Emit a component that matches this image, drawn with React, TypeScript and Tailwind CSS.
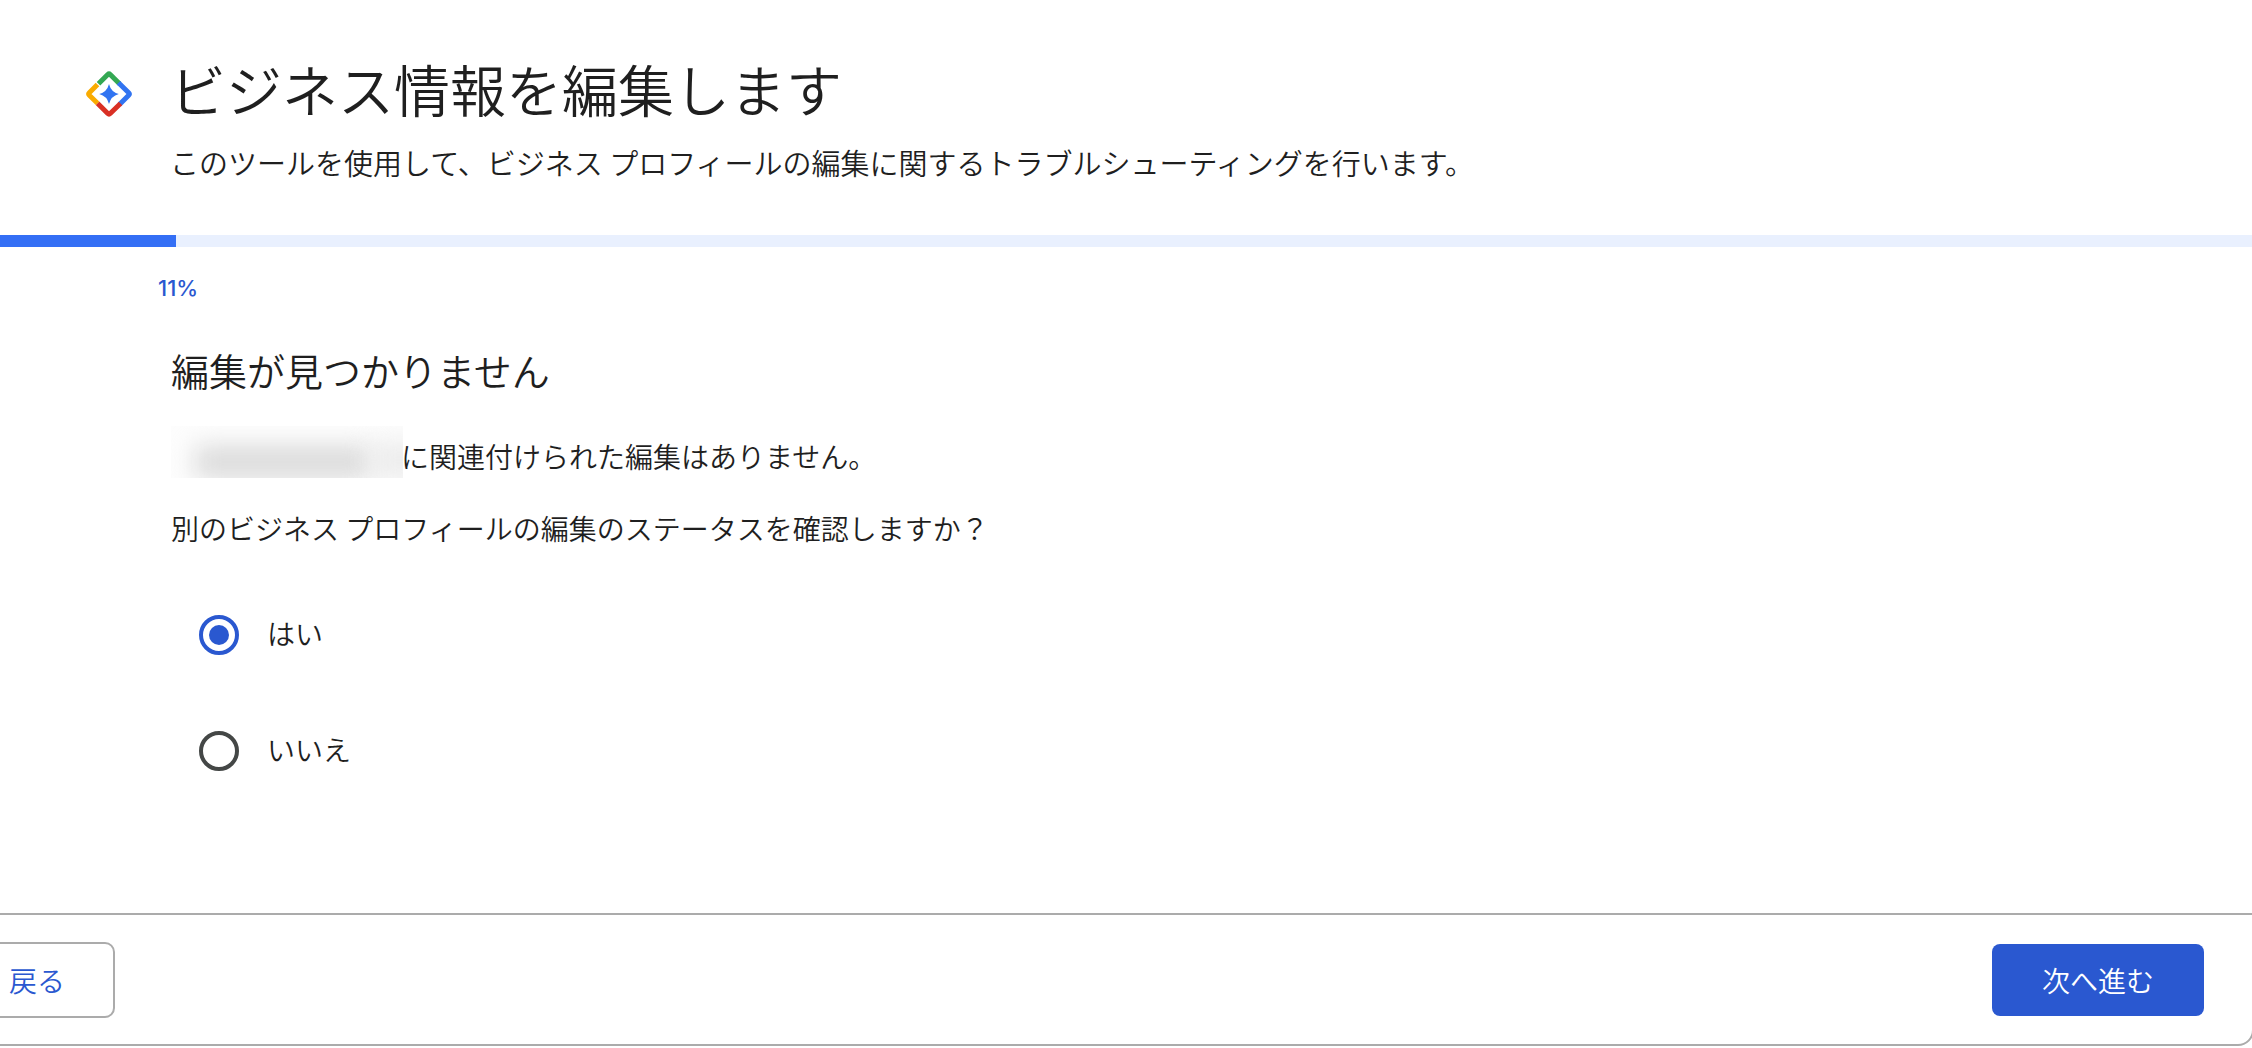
import { useState } from "react";

function Logo() {
  return (
    <svg className="size-12 shrink-0" viewBox="0 0 48 48" fill="none" strokeWidth="5" strokeLinejoin="round" aria-hidden="true">
      <path d="M34.5 13.8 25.2 4.5Q24 3.3 22.8 4.5L13.5 13.8" stroke="#34a853" />
      <path d="M33.5 12.8 43.7 22.8Q44.9 24 43.7 25.2L34.5 34.5" stroke="#3174f1" />
      <path d="M35.5 33.5 25.2 43.5Q24 44.7 22.8 43.5L12.5 33.2" stroke="#d93025" />
      <path d="M12.5 33.2 4.3 25.2Q3.1 24 4.3 22.8L12.5 14.6" stroke="#f9ab00" />
      <path d="M24 14Q26 22 33.8 24Q26 26 24 34Q22 26 14.2 24Q22 22 24 14Z" fill="#3174f1" />
    </svg>
  );
}

function Redacted() {
  return (
    <span aria-hidden="true" className="flex h-13 w-[232px] shrink-0 items-end overflow-hidden bg-[#fdfdfd] pl-6">
      <span className="h-8 w-44 shrink-0 bg-[#dadada] blur-md" />
      <span className="h-9 w-14 shrink-0 bg-[#ececec] blur-md" />
    </span>
  );
}

const options = ["はい", "いいえ"];

export default function App() {
  const [answer, setAnswer] = useState("はい");
  return (
    <main className="overflow-x-hidden bg-white font-['Noto_Sans_CJK_JP',sans-serif] text-[28px] leading-10 font-[350] text-[#1f1f1f]">
      <header className="flex gap-[37px] px-[85px] pt-[52px] pb-[53px]">
        <div className="pt-[18px]">
          <Logo />
        </div>
        <div>
          <h1 className="text-[56px] leading-[72px]">ビジネス情報を編集します</h1>
          <p className="mt-[18px] text-[29px]">このツールを使用して、ビジネス プロフィールの編集に関するトラブルシューティングを行います。</p>
        </div>
      </header>

      <div role="progressbar" aria-label="進行状況" aria-valuenow={11} className="h-3 bg-[#e9f0fe]">
        <div className="h-full w-44 bg-[#346ff5]" />
      </div>
      <p className="mt-[25px] pl-[158px] font-[Inter,sans-serif] text-[22px] leading-8 font-medium text-[#2a58d0]">11%</p>

      <section className="px-[171px] pt-[38px]">
        <h2 className="text-[38px] leading-[56px]">編集が見つかりません</h2>
        <div className="mt-7 flex items-center">
          <Redacted />
          <p className="-ml-0.5 pt-2">に関連付けられた編集はありません。</p>
        </div>
        <fieldset className="mt-[30px]">
          <legend>別のビジネス プロフィールの編集のステータスを確認しますか？</legend>
          <div className="mt-[65px] flex flex-col gap-[72px] pl-7">
            {options.map((o) => (
              <label key={o} className="flex items-center gap-7">
                <input
                  type="radio"
                  name="answer"
                  value={o}
                  checked={answer === o}
                  onChange={() => setAnswer(o)}
                  className="grid size-10 appearance-none place-items-center rounded-full border-4 border-[#444746] before:size-5 before:rounded-full checked:border-[#2a58d0] checked:before:bg-[#2a58d0]"
                />
                <span className="pb-1">{o}</span>
              </label>
            ))}
          </div>
        </fieldset>
      </section>

      <footer className="mt-[140px] -mr-0.5 -ml-[43px] flex items-center justify-between rounded-br-2xl border-2 border-[#ababab] pt-[27px] pb-[26px] pr-12">
        <button type="button" className="rounded-[10px] border-2 border-[#ababab] px-12 py-4 text-[#2a58d0]">
          戻る
        </button>
        <button type="button" className="rounded-lg bg-[#2a58d0] px-[50px] py-4 text-white">
          次へ進む
        </button>
      </footer>
    </main>
  );
}
